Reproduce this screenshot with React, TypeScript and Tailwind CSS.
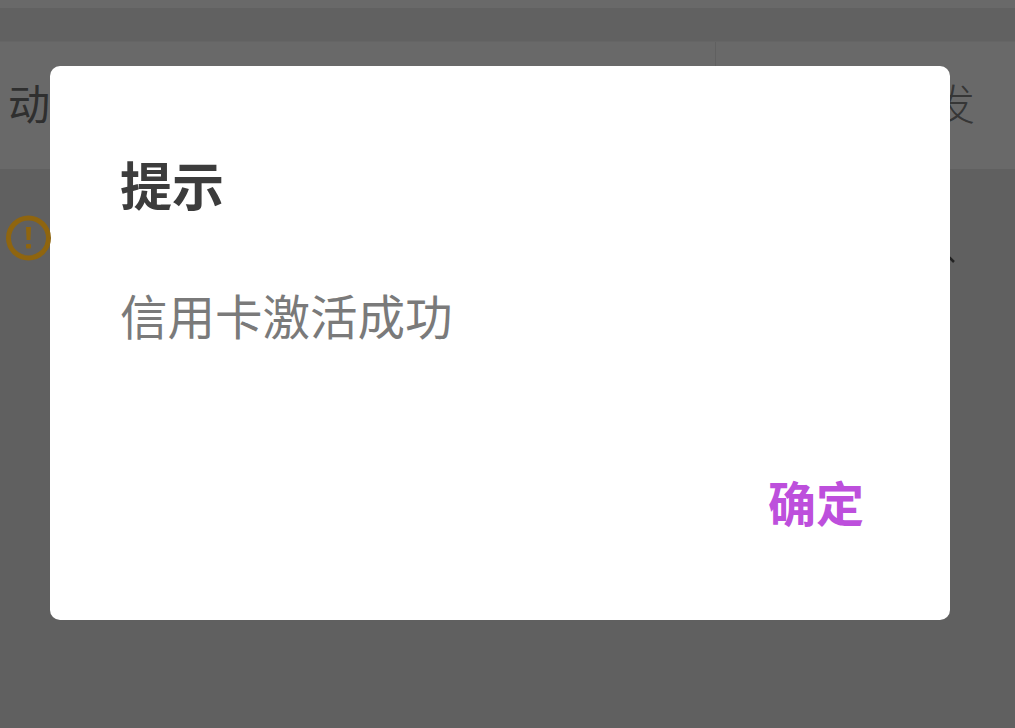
const fontStack = "font-['Roboto','Noto_Sans_CJK_SC',sans-serif]";

export default function App() {
    return (
        <div className={`relative h-[728px] w-full overflow-hidden bg-[#e4e4e4] ${fontStack}`}>
            {/* page behind the dialog */}
            <div className="h-2 bg-[#fbfbfb]" />
            <div className="h-[33px] bg-[#e6e6e6]" />
            <div className="flex h-[128px] border-t border-[#f0f0f0] bg-[#fbfbfb]">
                <div className="flex w-[715px] items-center pl-[8px] text-[#707070]">
                    <span className="text-[42px] leading-none">动</span>
                </div>
                <div className="h-[30px] w-px bg-[#e5e5e5]" />
                <div className="flex flex-1 items-center justify-end pr-[40px] text-[#808080]">
                    <span className="text-[42px] leading-none font-light">发</span>
                </div>
            </div>
            <div className="flex items-start justify-between pt-[46px] pr-[60px] pl-[6px]">
                <svg width="45" height="46" viewBox="0 0 45 46" fill="none" className="relative z-10">
                    <circle cx="22.5" cy="23" r="20" stroke="#8f650f" strokeWidth="5" />
                    <path d="M20 12 h5 l-0.6 13 h-3.8 z" fill="#8f650f" />
                    <rect x="20" y="29" width="5" height="4.5" rx="1" fill="#8f650f" />
                </svg>
                <svg width="10" height="10" viewBox="0 0 10 10" fill="none" className="mt-[38px]">
                    <path d="M1 2 L5 5 L9 9" stroke="#555555" strokeWidth="2.5" />
                </svg>
            </div>

            {/* overlay */}
            <div className="absolute inset-0 bg-black/58" />

            {/* dialog */}
            <div className="absolute top-[66px] left-[50px] flex h-[554px] w-[900px] flex-col rounded-[10px] bg-white pt-[93px] pr-[86px] pl-[70px]">
                <h2 className="text-[52px] leading-[60px] font-bold text-[#3c3c3c]">提示</h2>
                <p className="mt-[70px] text-[47.5px] leading-[60px] text-[#7a7a7a]">信用卡激活成功</p>
                <div className="mt-[127px] flex justify-end">
                    <button className="text-[48px] leading-[60px] font-bold text-[#bd4fdc]">确定</button>
                </div>
            </div>
        </div>
    );
}
